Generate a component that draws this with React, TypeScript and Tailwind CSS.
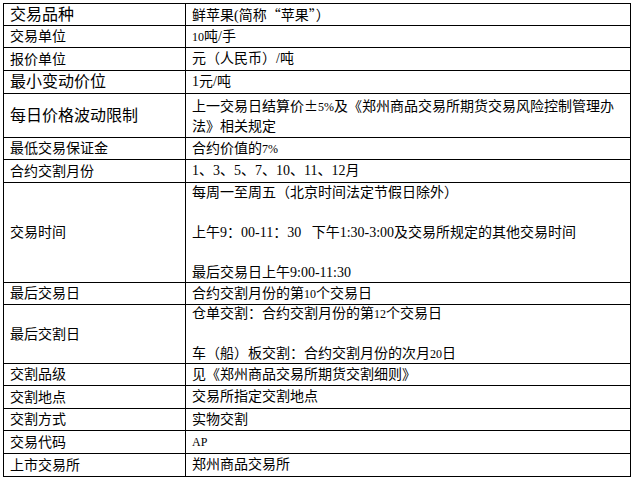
import React from "react";

type Row = {
  label: string;
  big?: boolean;
  h: string;
  value: React.ReactNode;
};

const Sm = ({ children }: { children: React.ReactNode }) => (
  <span className="text-[12px]">{children}</span>
);

// full-width punctuation taken from the CJK font
const Cjk = ({ children }: { children: React.ReactNode }) => (
  <span className="font-['Noto_Sans_CJK_SC',sans-serif]">{children}</span>
);

const rows: Row[] = [
  {
    label: "交易品种",
    big: true,
    h: "h-[22px]",
    value: (
      <>
        鲜苹果(简称<Cjk>“</Cjk>苹果<Cjk>”）</Cjk>
      </>
    ),
  },
  { label: "交易单位", h: "h-[22px]", value: <><Sm>10</Sm>吨/手</> },
  { label: "报价单位", h: "h-[23px]", value: "元（人民币）/吨" },
  { label: "最小变动价位", big: true, h: "h-[23px]", value: "1元/吨" },
  {
    label: "每日价格波动限制",
    big: true,
    h: "h-[44px]",
    value: (
      <>
        上一交易日结算价<Cjk>±</Cjk>
        <Sm>5%</Sm>及《郑州商品交易所期货交易风险控制管理办
        <br />
        法》相关规定
      </>
    ),
  },
  { label: "最低交易保证金", h: "h-[22px]", value: <>合约价值的<Sm>7%</Sm></> },
  { label: "合约交割月份", h: "h-[23px]", value: "1、3、5、7、10、11、12月" },
  {
    label: "交易时间",
    h: "h-[100px]",
    value: (
      <>
        每周一至周五（北京时间法定节假日除外）
        <br />
        <br />
        上午9：00-11：30{"\u00a0\u00a0\u00a0"}下午1:30-3:00及交易所规定的其他交易时间
        <br />
        <br />
        最后交易日上午9:00-11:30
      </>
    ),
  },
  { label: "最后交易日", h: "h-[22px]", value: <>合约交割月份的第<Sm>10</Sm>个交易日</> },
  {
    label: "最后交割日",
    h: "h-[59px]",
    value: (
      <>
        仓单交割：合约交割月份的第<Sm>12</Sm>个交易日
        <br />
        <br />
        车（船）板交割：合约交割月份的次月<Sm>20</Sm>日
      </>
    ),
  },
  { label: "交割品级", h: "h-[22px]", value: "见《郑州商品交易所期货交割细则》" },
  { label: "交割地点", h: "h-[23px]", value: "交易所指定交割地点" },
  { label: "交割方式", h: "h-[22px]", value: "实物交割" },
  { label: "交易代码", h: "h-[23px]", value: <Sm>AP</Sm> },
  { label: "上市交易所", h: "h-[23px]", value: "郑州商品交易所" },
];

export default function App() {
  return (
    <div className="w-[635px] h-[481px] bg-white pt-[3px] pl-[3px] font-['Liberation_Serif','Noto_Sans_CJK_SC',serif] text-black">
      <div className="w-[628px] border-t border-l border-black">
        {rows.map((r) => (
          <div key={r.label} className={`flex ${r.h} border-b border-black`}>
            <div
              className={`w-[182px] shrink-0 border-r border-black pl-[6px] flex items-center ${
                r.big ? "text-[16px]" : "text-[14px]"
              }`}
            >
              {r.label}
            </div>
            <div className="flex-1 border-r border-black pl-[6px] flex items-center text-[14px] leading-[20px]">
              <div>{r.value}</div>
            </div>
          </div>
        ))}
      </div>
    </div>
  );
}
